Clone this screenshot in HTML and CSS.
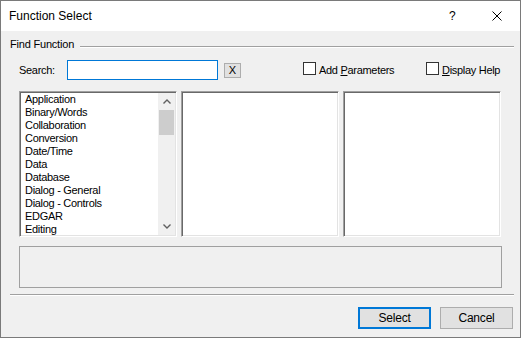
FILE: index.html
```html
<!DOCTYPE html>
<html lang="en">
<head>
    <meta charset="UTF-8">
    <title>Function Select</title>
    <link rel="stylesheet" href="styles.css">
</head>
<body>
<div class="window">
    <div class="titlebar">
        <span class="title">Function Select</span>
        <span class="help">?</span>
        <span class="close">
            <svg width="10" height="10" viewBox="0 0 10 10"><path d="M0.5 0.5 L9.5 9.5 M9.5 0.5 L0.5 9.5" stroke="#000" stroke-width="1" fill="none"/></svg>
        </span>
    </div>

    <div class="group-head">
        <span>Find Function</span>
        <div class="rule"></div>
    </div>

    <div class="search-row">
        <label class="search-label" for="search">Search:</label>
        <input class="search-input" type="text" id="search">
        <button class="clear">X</button>
        <label class="check check-params"><span class="box"></span><span>Add <u>P</u>arameters</span></label>
        <label class="check"><span class="box"></span><span><u>D</u>isplay Help</span></label>
    </div>

    <div class="lists">
        <div class="list">
            <ul class="items">
                <li>Application</li>
                <li>Binary/Words</li>
                <li>Collaboration</li>
                <li>Conversion</li>
                <li>Date/Time</li>
                <li>Data</li>
                <li>Database</li>
                <li>Dialog - General</li>
                <li>Dialog - Controls</li>
                <li>EDGAR</li>
                <li>Editing</li>
            </ul>
            <div class="scrollbar">
                <div class="arrow">
                    <svg width="8" height="5" viewBox="0 0 8 5"><path d="M0.5 4.5 L4 1 L7.5 4.5" stroke="#606060" stroke-width="1.4" fill="none"/></svg>
                </div>
                <div class="thumb"></div>
                <div class="track"></div>
                <div class="arrow">
                    <svg width="8" height="5" viewBox="0 0 8 5"><path d="M0.5 0.5 L4 4 L7.5 0.5" stroke="#606060" stroke-width="1.4" fill="none"/></svg>
                </div>
            </div>
        </div>
        <div class="list"></div>
        <div class="list"></div>
    </div>

    <div class="desc"></div>
    <div class="sep"></div>

    <div class="buttons">
        <button class="btn btn-default">Select</button>
        <button class="btn">Cancel</button>
    </div>
</div>
</body>
</html>
```

FILE: styles.css
```css
* {
    box-sizing: border-box;
}
body {
    margin: 0;
    font-family: "Liberation Sans", Arial, sans-serif;
    font-size: 11px;
    color: #000;
    background-color: #f0f0f0;
}
.window {
    width: 521px;
    height: 338px;
    border: 1px solid #7a7a7a;
    background-color: #f0f0f0;
    display: flex;
    flex-direction: column;
}
.titlebar {
    height: 30px;
    background-color: #fff;
    display: flex;
    align-items: center;
    padding-left: 8px;
    font-size: 12px;
}
.title {
    flex: 1;
}
.help {
    width: 7px;
}
.close {
    display: flex;
    margin-left: 36px;
    margin-right: 18px;
}
.group-head {
    margin-top: 6px;
    height: 14px;
    display: flex;
    align-items: flex-start;
    padding-left: 9px;
    padding-right: 6px;
    line-height: 14px;
    letter-spacing: -0.2px;
}
.rule {
    flex: 1;
    margin-left: 6px;
    margin-top: 9px;
    border-top: 1px solid #a0a0a0;
    border-bottom: 1px solid #fff;
}
.search-row {
    margin-top: 9px;
    height: 20px;
    display: flex;
    align-items: center;
    padding-left: 18px;
    letter-spacing: -0.3px;
}
.search-label {
    width: 48px;
}
.search-input {
    width: 151px;
    height: 20px;
    margin: 0;
    border: 1px solid #0078d7;
    background-color: #fff;
    outline: none;
}
.clear {
    width: 17px;
    height: 15px;
    margin-left: 6px;
    padding: 0;
    border: 1px solid #adadad;
    background-color: #e1e1e1;
    font-family: inherit;
    font-size: 11px;
    line-height: 12px;
}
.check {
    display: flex;
    align-items: center;
    gap: 3px;
}
.check-params {
    margin-left: 62px;
    width: 123px;
}
.box {
    width: 13px;
    height: 13px;
    border: 1px solid #333;
    background-color: #fff;
    margin-bottom: 3px;
}
.lists {
    margin-top: 11px;
    display: flex;
    gap: 4px;
    padding-left: 18px;
}
.list {
    width: 158px;
    height: 146px;
    background-color: #fff;
    border-top: 1px solid #a0a0a0;
    border-left: 1px solid #a0a0a0;
    border-right: 1px solid #fff;
    border-bottom: 1px solid #fff;
    box-shadow: inset 1px 1px 0 #696969, inset -1px -1px 0 #e3e3e3;
    padding: 1px;
    display: flex;
    overflow: hidden;
}
.items {
    list-style: none;
    margin: 0;
    padding: 0 0 0 4px;
    flex: 1;
    line-height: 13px;
    letter-spacing: -0.3px;
    overflow: hidden;
}
.scrollbar {
    width: 17px;
    background-color: #f0f0f0;
    display: flex;
    flex-direction: column;
}
.arrow {
    height: 17px;
    display: flex;
    align-items: center;
    justify-content: center;
}
.thumb {
    height: 25px;
    margin: 0 1px;
    background-color: #cdcdcd;
}
.track {
    flex: 1;
}
.desc {
    margin-top: 9px;
    margin-left: 18px;
    width: 483px;
    height: 42px;
    border: 1px solid #a0a0a0;
}
.sep {
    margin: 6px 6px 0 9px;
    border-top: 1px solid #a0a0a0;
    border-bottom: 1px solid #fff;
}
.buttons {
    margin-top: 11px;
    display: flex;
    justify-content: flex-end;
    gap: 9px;
    padding-right: 7px;
}
.btn {
    width: 73px;
    height: 22px;
    margin: 0;
    border: 1px solid #adadad;
    background-color: #e1e1e1;
    font-family: "Liberation Sans", Arial, sans-serif;
    font-size: 12px;
    color: #000;
    letter-spacing: -0.2px;
}
.btn-default {
    border: 2px solid #0078d7;
}
```
